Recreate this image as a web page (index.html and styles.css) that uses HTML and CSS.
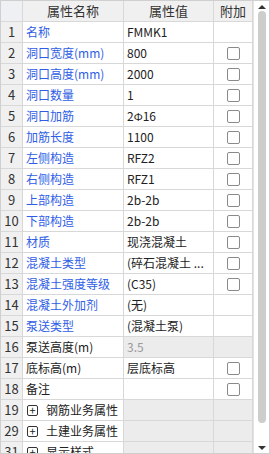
FILE: index.html
```html
<!DOCTYPE html>
<html lang="zh">
<head>
    <meta charset="UTF-8">
    <title>属性编辑</title>
    <link rel="stylesheet" href="styles.css">
</head>
<body>
    <div class="panel">
        <table class="prop-table">
            <colgroup>
                <col class="col-idx">
                <col class="col-name">
                <col class="col-val">
                <col class="col-add">
            </colgroup>
            <thead>
                <tr>
                    <th class="corner"></th>
                    <th>属性名称</th>
                    <th>属性值</th>
                    <th>附加</th>
                </tr>
            </thead>
            <tbody>
                <tr><td class="idx">1</td><td class="name blue">名称</td><td class="val">FMMK1</td><td class="add"></td></tr>
                <tr><td class="idx">2</td><td class="name blue">洞口宽度(mm)</td><td class="val">800</td><td class="add"><span class="check"></span></td></tr>
                <tr><td class="idx">3</td><td class="name blue">洞口高度(mm)</td><td class="val">2000</td><td class="add"><span class="check"></span></td></tr>
                <tr><td class="idx">4</td><td class="name blue">洞口数量</td><td class="val">1</td><td class="add"><span class="check"></span></td></tr>
                <tr><td class="idx">5</td><td class="name blue">洞口加筋</td><td class="val">2<span class="bar">Ф</span>16</td><td class="add"><span class="check"></span></td></tr>
                <tr><td class="idx">6</td><td class="name blue">加筋长度</td><td class="val">1100</td><td class="add"><span class="check"></span></td></tr>
                <tr><td class="idx">7</td><td class="name blue">左侧构造</td><td class="val">RFZ2</td><td class="add"><span class="check"></span></td></tr>
                <tr><td class="idx">8</td><td class="name blue">右侧构造</td><td class="val">RFZ1</td><td class="add"><span class="check"></span></td></tr>
                <tr><td class="idx">9</td><td class="name blue">上部构造</td><td class="val">2b-2b</td><td class="add"><span class="check"></span></td></tr>
                <tr><td class="idx">10</td><td class="name blue">下部构造</td><td class="val">2b-2b</td><td class="add"><span class="check"></span></td></tr>
                <tr><td class="idx">11</td><td class="name blue">材质</td><td class="val">现浇混凝土</td><td class="add"><span class="check"></span></td></tr>
                <tr><td class="idx">12</td><td class="name blue">混凝土类型</td><td class="val">(碎石混凝土 ...</td><td class="add"><span class="check"></span></td></tr>
                <tr><td class="idx">13</td><td class="name blue">混凝土强度等级</td><td class="val">(C35)</td><td class="add"><span class="check"></span></td></tr>
                <tr><td class="idx">14</td><td class="name blue">混凝土外加剂</td><td class="val">(无)</td><td class="add"></td></tr>
                <tr><td class="idx">15</td><td class="name blue">泵送类型</td><td class="val">(混凝土泵)</td><td class="add"></td></tr>
                <tr class="locked"><td class="idx">16</td><td class="name">泵送高度(m)</td><td class="val dim">3.5</td><td class="add"></td></tr>
                <tr><td class="idx">17</td><td class="name">底标高(m)</td><td class="val">层底标高</td><td class="add"><span class="check"></span></td></tr>
                <tr><td class="idx">18</td><td class="name">备注</td><td class="val"></td><td class="add"><span class="check"></span></td></tr>
                <tr class="group"><td class="idx">19</td><td class="name"><span class="plus">+</span>钢筋业务属性</td><td class="val"></td><td class="add"></td></tr>
                <tr class="group"><td class="idx">29</td><td class="name"><span class="plus">+</span>土建业务属性</td><td class="val"></td><td class="add"></td></tr>
                <tr class="group"><td class="idx">31</td><td class="name"><span class="plus">+</span>显示样式</td><td class="val"></td><td class="add"></td></tr>
            </tbody>
        </table>

        <!-- vertical scrollbar -->
        <div class="scrollbar">
            <span class="arrow up"></span>
            <div class="thumb"></div>
            <span class="arrow down"></span>
        </div>
    </div>
</body>
</html>
```

FILE: styles.css
```css
body {
    margin: 0;
    font-family: "Noto Sans CJK SC", "Noto Sans", sans-serif;
    font-size: 12px;
    color: #222;
    background: #fff;
}

.panel {
    width: 270px;
    height: 454px;
    box-sizing: border-box;
    border: 1px solid #cfcfcf;
    display: flex;
    overflow: hidden;
}

.prop-table {
    width: 252px;
    table-layout: fixed;
    border-collapse: separate;
    border-spacing: 0;
    align-self: flex-start;
}

.col-idx { width: 22px; }
.col-name { width: 101px; }
.col-val { width: 90px; }
.col-add { width: 39px; }

.prop-table th,
.prop-table td {
    box-sizing: border-box;
    height: 21px;
    padding: 0 3px;
    border-right: 1px solid #d8d8d8;
    border-bottom: 1px solid #d8d8d8;
    white-space: nowrap;
    overflow: hidden;
    line-height: 20px;
}

.prop-table th {
    height: 21px;
    background: #f0f0f0;
    font-weight: normal;
    color: #333;
    text-align: center;
    font-size: 13px;
}

.prop-table th.corner {
    background: #eef0f4;
}

.idx {
    background: #f0f0f0;
    text-align: center;
    font-size: 13px;
    color: #333;
}

.prop-table td.idx {
    padding: 0;
}

.name,
.val {
    text-align: left;
}

.blue {
    color: #2f5ee6;
}

.val {
    font-size: 12px;
}

.bar {
    font-size: 11px;
}

.add {
    text-align: center;
}

.check {
    display: inline-block;
    width: 13px;
    height: 13px;
    box-sizing: border-box;
    border: 1px solid #8a8a8a;
    border-radius: 2px;
    vertical-align: middle;
    margin-top: -2px;
}

.locked .val,
.locked .add,
.group .val,
.group .add {
    background: #ececec;
}

.dim {
    color: #9a9a9a;
}

.plus {
    display: inline-block;
    width: 11px;
    height: 11px;
    box-sizing: border-box;
    border: 1px solid #333;
    border-radius: 2px;
    line-height: 8px;
    font-size: 11px;
    text-align: center;
    vertical-align: middle;
    margin: -2px 8px 0 1px;
}

.scrollbar {
    width: 16px;
    border-left: 1px solid #e2e2e2;
    box-sizing: border-box;
    display: flex;
    flex-direction: column;
    align-items: center;
    padding: 4px 0 3px;
}

.arrow {
    width: 0;
    height: 0;
    border-left: 4px solid transparent;
    border-right: 4px solid transparent;
}

.arrow.up {
    border-bottom: 4px solid #333;
}

.arrow.down {
    border-top: 4px solid #333;
}

.thumb {
    width: 8px;
    height: 412px;
    margin: 2px 0 auto;
    background: #cdcdcd;
    border-radius: 4px;
}
```
